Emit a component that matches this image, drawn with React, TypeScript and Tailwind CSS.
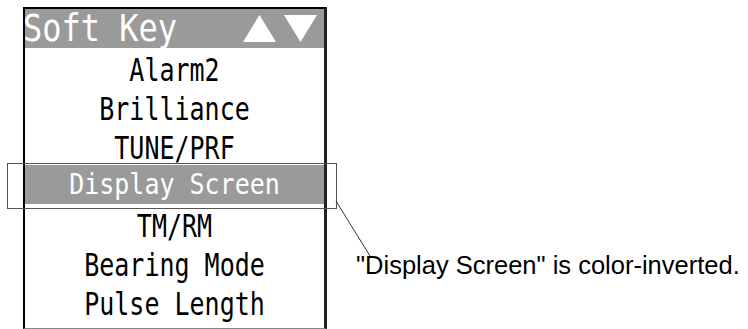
const items = ['Alarm2', 'Brilliance', 'TUNE/PRF', 'Display Screen', 'TM/RM', 'Bearing Mode', 'Pulse Length']

export default function App() {
  return (
    <div className="relative w-[748px] h-[329px] overflow-hidden bg-white">
      <div className="flex items-start pl-[23px] pt-[7px]">
        {/* Soft key panel */}
        <div className="w-[304px] h-[322px] border-l-[2px] border-t-[2px] border-r-[3px] border-b border-l-black border-t-black border-r-[#222] border-b-[#888] flex flex-col">
          <div className="h-[39px] bg-[#9a9a9a] flex items-center justify-between pr-[7px] shrink-0">
            <span className="font-['DejaVu_Sans_Mono',monospace] text-[32px] leading-none text-white inline-block scale-y-[1.15] -ml-[2px] -mt-[2px]">
              Soft Key
            </span>
            <div className="flex items-center gap-[8px]">
              <svg width="33" height="27" viewBox="0 0 33 27">
                <polygon points="16.5,0 33,27 0,27" fill="white" />
              </svg>
              <svg width="33" height="27" viewBox="0 0 33 27">
                <polygon points="0,0 33,0 16.5,27" fill="white" />
              </svg>
            </div>
          </div>
          {items.map((item) => {
            const active = item === 'Display Screen'
            return (
              <div
                key={item}
                className={
                  active
                    ? 'h-[39px] flex items-center justify-center bg-[#9a9a9a]'
                    : 'h-[39px] flex items-center justify-center'
                }
              >
                {active ? (
                  <span className="font-['DejaVu_Sans_Mono',monospace] text-[25px] leading-none text-white inline-block scale-y-[1.15]">
                    {item}
                  </span>
                ) : (
                  <span className="font-['DejaVu_Sans_Mono',monospace] text-[25px] leading-none text-black inline-block scale-y-[1.3] mt-[4px]">
                    {item}
                  </span>
                )}
              </div>
            )
          })}
        </div>

        <p className="ml-[29px] mt-[246px] font-['Liberation_Sans',Arial,sans-serif] text-[25.5px] leading-none text-black whitespace-nowrap">
          "Display Screen" is color-inverted.
        </p>
      </div>

      {/* callout outline and leader line */}
      <div className="absolute left-[7px] top-[163px] w-[330px] h-[46px] border border-[#555]" />
      <svg className="absolute left-0 top-0" width="748" height="329">
        <line x1="336" y1="201" x2="370" y2="256" stroke="#333" strokeWidth="1" />
      </svg>
    </div>
  )
}
